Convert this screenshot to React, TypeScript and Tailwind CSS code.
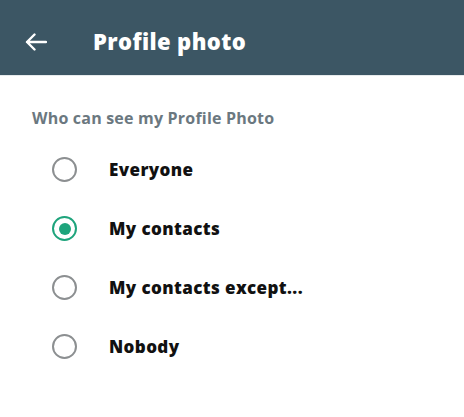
import { useState } from "react";

const options = ["Everyone", "My contacts", "My contacts except...", "Nobody"];

export default function App() {
  const [selected, setSelected] = useState("My contacts");

  return (
    <div className="w-[464px] h-[417px] bg-white overflow-hidden" style={{ fontFamily: "'Open Sans', 'Noto Sans', sans-serif" }}>
      {/* Header */}
      <header className="h-[76px] bg-[#3c5664] flex items-center pt-[8px] pl-[25px] border-b border-[#e6eaec]">
        <svg width="22" height="18" viewBox="0 0 22 18" fill="none" stroke="white" strokeWidth="2.4" strokeLinecap="round" strokeLinejoin="round">
          <path d="M21 9H2M9.5 1.5L2 9l7.5 7.5" />
        </svg>
        <h1 className="ml-[46px] text-[22px] font-extrabold text-white tracking-[0.4px]">Profile photo</h1>
      </header>

      {/* Section */}
      <div className="pt-[32px]">
        <p className="pl-[32px] text-[16px] font-bold text-[#6b7880] tracking-[0.2px] leading-[20px]">Who can see my Profile Photo</p>
        <ul className="mt-[12px]">
          {options.map((opt) => {
            const active = opt === selected;
            return (
              <li
                key={opt}
                onClick={() => setSelected(opt)}
                className="h-[59px] flex items-center pl-[52px] cursor-pointer"
              >
                <span
                  className={
                    active
                      ? "w-[25px] h-[25px] rounded-full border-[2.5px] border-[#1ea47c] flex items-center justify-center"
                      : "w-[25px] h-[25px] rounded-full border-[2.5px] border-[#8c8f91] flex items-center justify-center"
                  }
                >
                  {active && <span className="w-[12px] h-[12px] rounded-full bg-[#1ea47c]" />}
                </span>
                <span className="ml-[32px] text-[17px] font-extrabold text-[#111] tracking-[0.4px]">{opt}</span>
              </li>
            );
          })}
        </ul>
      </div>
    </div>
  );
}
